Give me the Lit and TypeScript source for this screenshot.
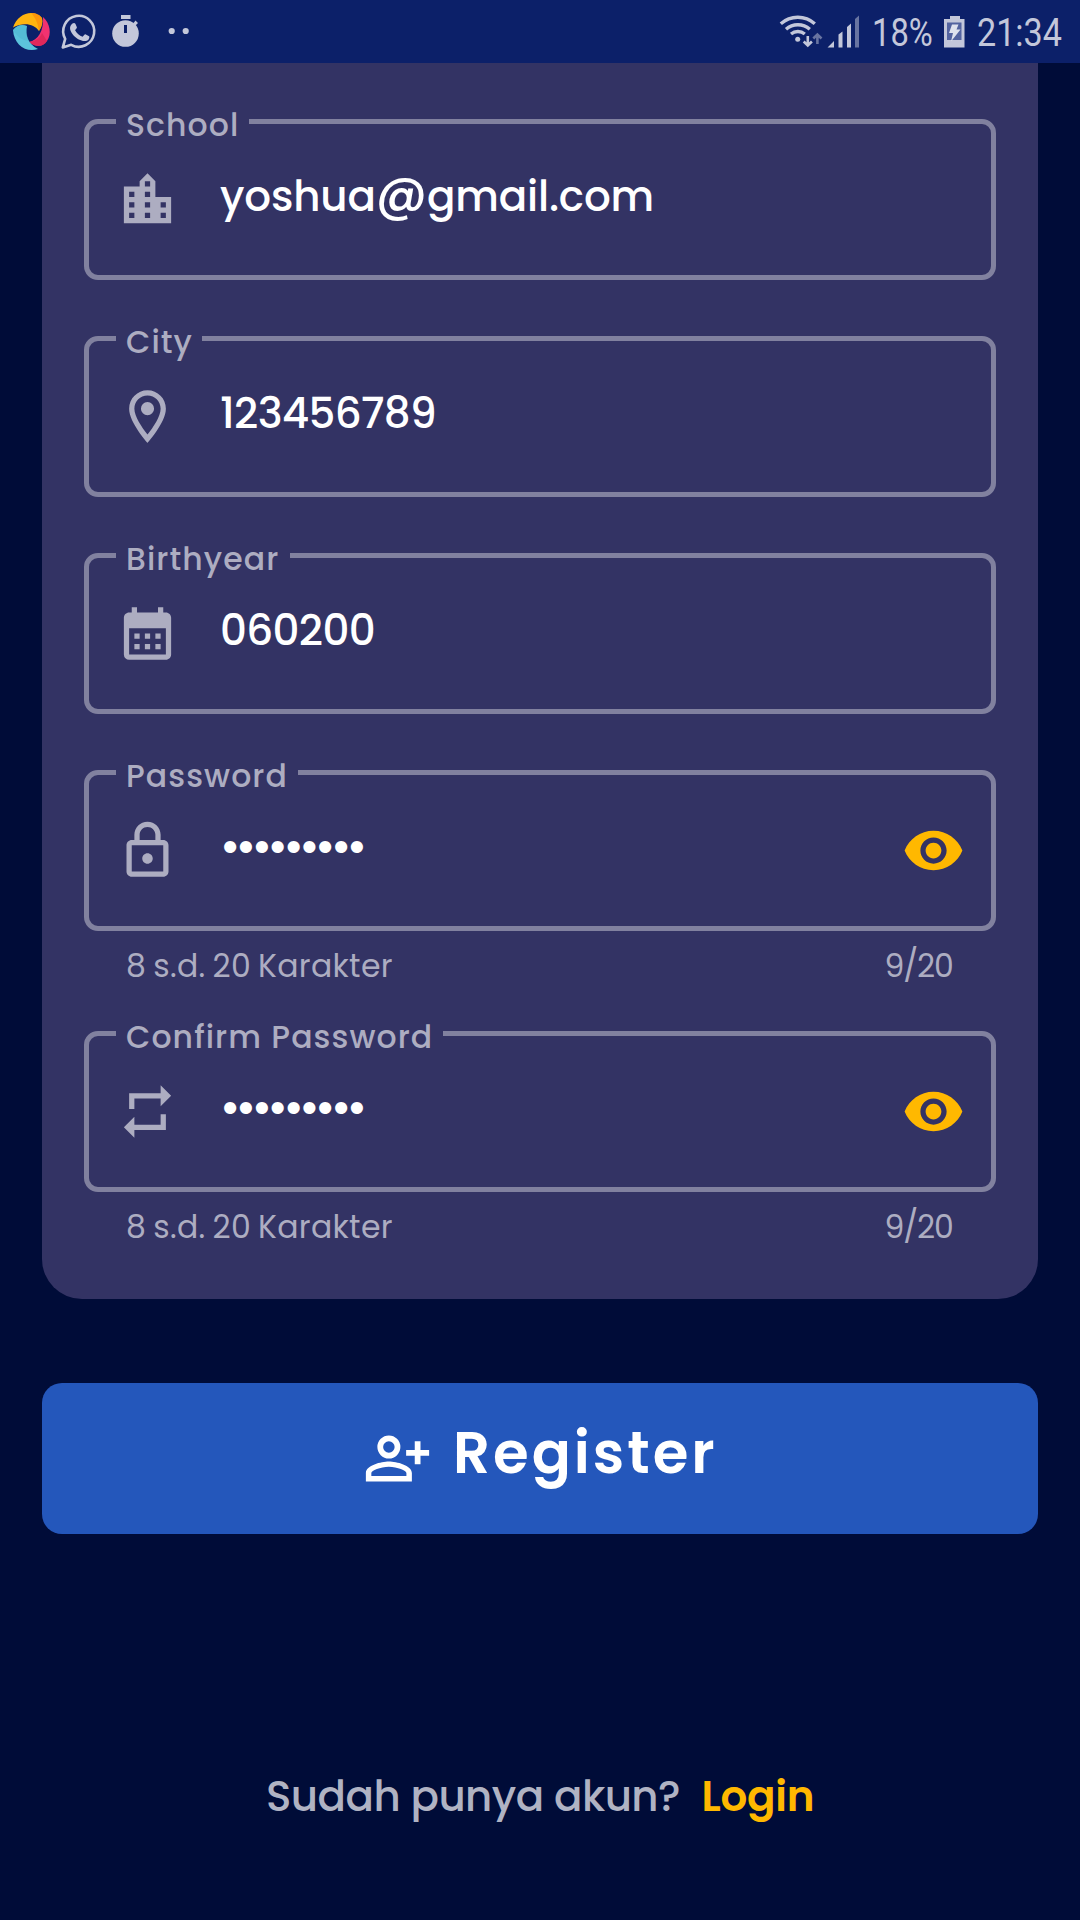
import { LitElement, html, css, svg, nothing } from "lit";
import { customElement, property } from "lit/decorators.js";
import { styleMap } from "lit/directives/style-map.js";

const ICONS: Record<string, string> = {
  school:
    "M15 11V5l-3-3-3 3v2H3v14h18V11h-6zm-8 8H5v-2h2v2zm0-4H5v-2h2v2zm0-4H5V9h2v2zm6 8h-2v-2h2v2zm0-4h-2v-2h2v2zm0-4h-2V9h2v2zm0-4h-2V5h2v2zm6 12h-2v-2h2v2zm0-4h-2v-2h2v2z",
  city:
    "M12 2C8.13 2 5 5.13 5 9c0 5.25 7 13 7 13s7-7.75 7-13c0-3.87-3.13-7-7-7zM7 9c0-2.76 2.24-5 5-5s5 2.24 5 5c0 2.88-2.88 7.19-5 9.88C9.92 16.21 7 11.85 7 9zM12 6.5a2.5 2.5 0 1 0 0 5 2.5 2.5 0 1 0 0-5z",
  calendar:
    "M19 4h-1V2h-2v2H8V2H6v2H5c-1.11 0-2 .9-2 2v14a2 2 0 0 0 2 2h14c1.1 0 2-.9 2-2V6c0-1.1-.9-2-2-2zm0 16H5V10h14v10zM9 14H7v-2h2v2zm4 0h-2v-2h2v2zm4 0h-2v-2h2v2zm-8 4H7v-2h2v2zm4 0h-2v-2h2v2zm4 0h-2v-2h2v2z",
  lock:
    "M18 8h-1V6c0-2.76-2.24-5-5-5S7 3.24 7 6v2H6c-1.1 0-2 .9-2 2v10c0 1.1.9 2 2 2h12c1.1 0 2-.9 2-2V10c0-1.1-.9-2-2-2zM9 6c0-1.66 1.34-3 3-3s3 1.34 3 3v2H9V6zm9 14H6V10h12v10zm-6-3c1.1 0 2-.9 2-2s-.9-2-2-2-2 .9-2 2 .9 2 2 2z",
  repeat: "M7 7h10v3l4-4-4-4v3H5v6h2V7zm10 10H7v-3l-4 4 4 4v-3h12v-6h-2v4z",
  eye:
    "M12 4.5C7 4.5 2.73 7.61 1 12c1.73 4.39 6 7.5 11 7.5s9.27-3.11 11-7.5c-1.73-4.39-6-7.5-11-7.5zM12 17c-2.76 0-5-2.24-5-5s2.24-5 5-5 5 2.24 5 5-2.24 5-5 5zm0-8c-1.66 0-3 1.34-3 3s1.34 3 3 3 3-1.34 3-3-1.34-3-3-3z",
  personAdd:
    "M9 4a4 4 0 1 0 0 8 4 4 0 1 0 0-8zm0 2a2 2 0 1 1 0 4 2 2 0 1 1 0-4zM9 13c-2.67 0-8 1.34-8 4v3h16v-3c0-2.66-5.33-4-8-4zm0 1.9c2.97 0 6.1 1.46 6.1 2.1v1.1H2.9V17c0-.64 3.13-2.1 6.1-2.1zM20 14v-3h3V9h-3V6h-2v3h-3v2h3v3h2z",
};

const icon = (name: string) =>
  html`<svg class="icon" viewBox="0 0 24 24" fill="currentColor">${svg`<path d=${ICONS[name]}></path>`}</svg>`;

interface Field {
  label: string;
  icon: string;
  value: string;
  labelWidth: number;
  secret?: boolean;
}

const FIELDS: Field[] = [
  { label: "School", icon: "school", value: "yoshua@gmail.com", labelWidth: 133 },
  { label: "City", icon: "city", value: "123456789", labelWidth: 86 },
  { label: "Birthyear", icon: "calendar", value: "060200", labelWidth: 174 },
  { label: "Password", icon: "lock", value: "•••••••••", labelWidth: 182, secret: true },
  { label: "Confirm Password", icon: "repeat", value: "•••••••••", labelWidth: 327, secret: true },
];

/** Draws the at sign of an address larger than the letters around it. */
const valueText = (value: string) => {
  const [name, host] = value.split("@");
  return host
    ? html`<span class="address">${name}<span class="at">@</span>${host}</span>`
    : value;
};

@customElement("form-field")
class FormField extends LitElement {
  @property({ attribute: false }) field!: Field;

  static styles = css`
    :host {
      display: block;
    }
    .box {
      box-sizing: border-box;
      width: 912px;
      height: 178px;
      margin: 0;
      padding: 0;
      border: 5px solid #81819f;
      border-radius: 14px;
      min-width: 0;
    }
    .label {
      box-sizing: border-box;
      height: 39px;
      margin-left: 27px;
      padding: 7px 0 0 10px;
      font-size: 31.5px;
      line-height: 33px;
      font-weight: 500;
      letter-spacing: 1.08px;
      color: #adadc1;
      white-space: nowrap;
    }
    .row {
      display: flex;
      align-items: center;
      height: 151px;
      margin-top: -17px;
      padding: 0 26px 0 27px;
      color: #adadc1;
    }
    .icon {
      width: 63px;
      height: 63px;
      flex: none;
      display: block;
    }
    .value {
      flex: 1;
      height: 50px;
      margin-left: 41px;
      padding-bottom: 6px;
      font-size: 42px;
      line-height: 50px;
      font-weight: 500;
      letter-spacing: -0.65px;
      color: #fff;
      white-space: nowrap;
    }
    .address {
      letter-spacing: -0.15px;
    }
    .at {
      font-size: 50px;
      line-height: 40px;
    }
    .secret {
      padding-bottom: 9px;
      margin-left: 40.5px;
      font-size: 46px;
      letter-spacing: -5.4px;
    }
    .toggle {
      color: #ffb800;
    }
    .notes {
      display: flex;
      justify-content: space-between;
      height: 83px;
      box-sizing: border-box;
      padding: 16px 43.5px 0 42px;
      font-size: 31.5px;
      line-height: 38px;
      color: #adadc1;
    }
    .hint {
      letter-spacing: 0.34px;
      word-spacing: -1.8px;
    }
    .count {
      letter-spacing: -1.2px;
    }
  `;

  render() {
    const f = this.field;
    return html`
      <fieldset class="box">
        <legend class="label" style=${styleMap({ width: `${f.labelWidth}px` })}>${f.label}</legend>
        <div class="row">
          ${icon(f.icon)}
          <span class="value ${f.secret ? "secret" : ""}">${valueText(f.value)}</span>
          ${f.secret ? html`<span class="toggle">${icon("eye")}</span>` : nothing}
        </div>
      </fieldset>
      ${f.secret
        ? html`<div class="notes"><span class="hint">8 s.d. 20 Karakter</span><span class="count">9/20</span></div>`
        : nothing}
    `;
  }
}

@customElement("status-bar")
class StatusBar extends LitElement {
  static styles = css`
    :host {
      display: flex;
      justify-content: space-between;
      height: 63px;
      background: #0c2069;
      color: #c3c7da;
      font-family: Roboto, sans-serif;
    }
    .art {
      display: block;
      flex: none;
    }
    .right {
      display: flex;
    }
    .text {
      display: block;
      font-size: 39px;
      line-height: 66px;
      transform: scaleX(0.84);
      transform-origin: 0 0;
      white-space: nowrap;
    }
    .percent {
      width: 69.5px;
    }
    .clock {
      width: 103.5px;
      transform: scaleX(0.875);
    }
  `;

  render() {
    return html`
      <svg class="art" width="220" height="63" viewBox="0 0 220 63">
        <path fill="#ffb30f" d="M13 27.500C16 18 24 13 31 13c5 0 9 2 11 5 1 4 0 9-3 13-5-7-15-9-26-3.500z"></path>
        <path fill="#f98a0a" d="M31 13c5 0 9 2 11 5 1 4 0 9-3 13-1-8-4-14-8-18z" opacity=".7"></path>
        <path fill="#f23270" d="M43 17c7 6 9 17 4 24-4 6-11 7-18 1 9-2 15-11 14-25z"></path>
        <path fill="#da2352" d="M47 41c-4 6-11 7-18 1 7-1 11-4 13-9z" opacity=".7"></path>
        <path fill="#5cc3dc" d="M13 30c4-5 9-6 14-4-2 9 1 18 11 23-12 4-24-4-25-19z"></path>
        <path fill="#45aeca" d="M13 30c4-5 9-6 14-4-1 6 0 11 2 15-8-1-12-5-16-11z" opacity=".35"></path>
        <path fill="none" stroke="currentColor" stroke-width="2.6" stroke-linejoin="round" d="M62.800 47.400l2.400-8.600a15.500 15.500 0 1 1 6 6z"></path>
        <path fill="currentColor" d="M72.500 23.500c1-.9 2.500-.8 3 .4l1.400 3.300c.2.700-1.300 2.300-1.800 3 1.800 3.200 4.300 5.300 7.500 6.600.9-.8 2-2.700 2.800-2.500l3.700 1.900c.9.700-.2 3.500-1.700 4.300-7.500 3.200-19.500-8-17-14.200.4-1.200 1.300-2.200 2.100-2.800z"></path>
        <circle cx="125.500" cy="33.500" r="13.300" fill="currentColor"></circle>
        <path fill="currentColor" d="M121 15h9.500v4H121zM132 25l3.500-4.500 2.500 2.500-4 4z"></path>
        <path fill="#0c2069" d="M124 25h3v8h-3z"></path>
        <circle cx="171.700" cy="31" r="3.100" fill="currentColor"></circle>
        <circle cx="185.700" cy="31" r="3.100" fill="currentColor"></circle>
      </svg>
      <div class="right">
        <svg class="art" width="93" height="63" viewBox="779 0 93 63">
          <g fill="none" stroke="currentColor" stroke-width="3.400">
            <path d="M780.800 23.800a25.500 25.500 0 0 1 34 0"></path>
            <path d="M786 29.200a18 18 0 0 1 23.800 0"></path>
            <path d="M791 34a11 11 0 0 1 13.800 0"></path>
            <path stroke-width="2.600" d="M807.800 36v9M803.700 41.500l4.100 4 4.100-4"></path>
            <path stroke-width="2.600" opacity=".5" d="M817.400 44v-9M813.300 38.500l4.100-4 4.100 4"></path>
          </g>
          <circle cx="797.700" cy="39.300" r="2.500" fill="currentColor"></circle>
          <path fill="currentColor" d="M827.500 47.500l6.500-6.500v6.500zM838.500 47.500V34.500l4-3v16zM847 47.500V27l4-3.500v24z"></path>
          <path fill="currentColor" opacity=".5" d="M855 47.500V19l4-3.500v32z"></path>
        </svg>
        <span class="text percent">18%</span>
        <svg class="art" width="35.500" height="63" viewBox="942 0 35.500 63">
          <path fill="currentColor" d="M951 16h10v3h4.500v28.500h-20.500V19h6z"></path>
          <path fill="#5363a0" d="M948 22.500h14.500V40H948z"></path>
          <path fill="#dfe2ee" d="M953 24.500h6.500l-2 5h4l-9.500 12 2-8.500h-4z"></path>
        </svg>
        <span class="text clock">21:34</span>
      </div>
    `;
  }
}

@customElement("app-root")
class AppRoot extends LitElement {
  static styles = css`
    :host {
      display: flex;
      flex-direction: column;
      width: 1080px;
      height: 1920px;
      overflow: hidden;
      background: #000c38;
      font-family: Poppins, Inter, "Liberation Sans", sans-serif;
    }
    .card {
      display: flex;
      flex-direction: column;
      gap: 39px;
      box-sizing: border-box;
      height: 1236px;
      margin: 0 42px;
      padding: 39px 42px 0;
      background: #333364;
      border-radius: 0 0 40px 40px;
    }
    .confirm {
      margin-top: -39px;
    }
    .register {
      display: flex;
      align-items: center;
      justify-content: flex-start;
      box-sizing: border-box;
      width: 996px;
      height: 151px;
      margin: 84px 42px 0;
      padding: 0 0 0 321px;
      border: 0;
      border-radius: 20px;
      background: #2457bb;
      color: #fff;
      font: inherit;
    }
    .icon {
      width: 69px;
      height: 69px;
      flex: none;
    }
    .caption {
      margin-left: 21px;
      padding-bottom: 12px;
      font-size: 57.75px;
      line-height: 68px;
      font-weight: 600;
      letter-spacing: 3px;
    }
    .footer {
      display: flex;
      gap: 21.5px;
      margin: 238px 0 0 266px;
      font-size: 42px;
      line-height: 50px;
      font-weight: 500;
      color: #b0b3c3;
      white-space: nowrap;
    }
    .ask {
      letter-spacing: -0.55px;
    }
    .login {
      color: #ffb800;
      font-weight: 600;
      letter-spacing: -0.3px;
    }
  `;

  render() {
    return html`
      <status-bar></status-bar>
      <main class="card">
        ${FIELDS.map(
          (f, i) => html`<form-field class=${i === 4 ? "confirm" : ""} .field=${f}></form-field>`
        )}
      </main>
      <button class="register">${icon("personAdd")}<span class="caption">Register</span></button>
      <div class="footer"><span class="ask">Sudah punya akun?</span><span class="login">Login</span></div>
    `;
  }
}
